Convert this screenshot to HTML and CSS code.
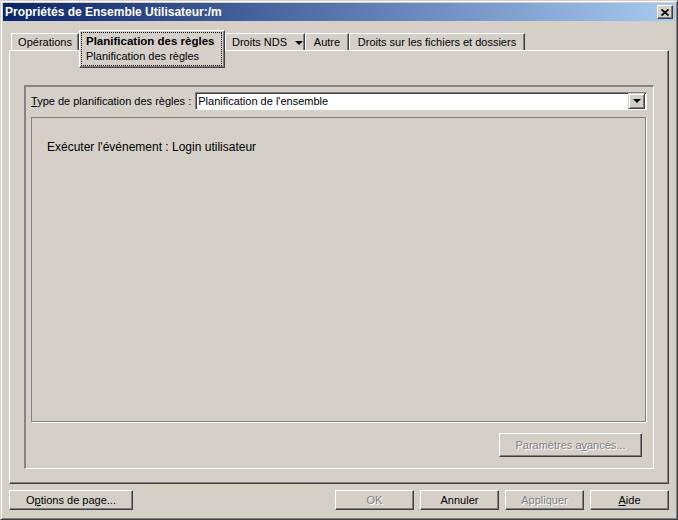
FILE: index.html
```html
<!DOCTYPE html>
<html lang="fr">
<head>
<meta charset="utf-8">
<title>Propriétés de Ensemble Utilisateur:/m</title>
<link rel="stylesheet" href="styles.css">
</head>
<body>
<div class="window">
  <div class="titlebar">
    <span class="title">Propriétés de Ensemble Utilisateur:/m</span>
    <span class="close"><svg width="8" height="7" viewBox="0 0 8 7"><path d="M0.5 0.5 L7.5 6.5 M7.5 0.5 L0.5 6.5" stroke="#000" stroke-width="1.7" fill="none"/></svg></span>
  </div>
  <div class="body">
    <div class="tabs">
      <div class="tab t-ops">Opérations</div>
      <div class="tab sel"><div class="focus"><div class="sel-main">Planification des règles</div><div class="sel-sub">Planification des règles</div></div></div>
      <div class="tab t-nds">Droits NDS <span class="tri"></span></div>
      <div class="tab t-autre">Autre</div>
      <div class="tab t-files">Droits sur les fichiers et dossiers</div>
    </div>
    <div class="panel">
      <div class="group">
        <div class="combo-row">
          <span class="label"><u>T</u>ype de planification des règles :</span>
          <div class="combo">
            <span class="combo-text">Planification de l'ensemble</span>
            <span class="drop"><span class="tri"></span></span>
          </div>
        </div>
        <div class="subpanel">
          <p class="event">Exécuter l'événement : Login utilisateur</p>
        </div>
        <div class="adv-row">
          <button class="btn adv disabled">Paramètres a<u>v</u>ancés...</button>
        </div>
      </div>
    </div>
    <div class="buttons">
      <button class="btn wide">O<u>p</u>tions de page...</button>
      <div class="right-buttons">
        <button class="btn disabled">OK</button>
        <button class="btn">Annuler</button>
        <button class="btn disabled">Appliquer</button>
        <button class="btn"><u>A</u>ide</button>
      </div>
    </div>
  </div>
</div>
</body>
</html>
```

FILE: styles.css
```css
* { box-sizing: border-box; }

body {
  margin: 0;
  background: #d4d0c8;
  font: 11px "Liberation Sans", Arial, sans-serif;
  color: #000;
}

.window {
  width: 678px;
  height: 520px;
  border: 1px solid;
  border-color: #d4d0c8 #404040 #404040 #d4d0c8;
  box-shadow: inset 1px 1px #fff, inset -1px -1px #808080;
  padding: 2px;
  background: #d4d0c8;
}

.titlebar {
  height: 18px;
  display: flex;
  align-items: center;
  justify-content: space-between;
  padding: 0 2px;
  background: linear-gradient(to right, #0a246a, #a6caf0);
  color: #fff;
  font-weight: bold;
  font-size: 12px;
}

.close {
  width: 16px;
  height: 14px;
  background: #d4d0c8;
  border: 1px solid;
  border-color: #fff #404040 #404040 #fff;
  box-shadow: inset -1px -1px #808080;
  display: flex;
  align-items: center;
  justify-content: center;
}

.body {
  padding: 9px 6px 0;
}

.tabs {
  display: flex;
  align-items: flex-end;
  height: 20px;
  padding-left: 2px;
  position: relative;
  z-index: 1;
}

.tab {
  height: 17px;
  border-top: 1px solid #fff;
  border-left: 1px solid #fff;
  border-right: 1px solid #404040;
  box-shadow: inset -1px 0 #808080;
  line-height: 16px;
  text-align: center;
  white-space: nowrap;
  background: #d4d0c8;
}

.t-ops { width: 68px; }
.t-nds { width: 80px; text-align: left; padding-left: 6px; }
.t-autre { width: 44px; }
.t-files { width: 176px; }

.tab.sel {
  width: 146px;
  height: 38px;
  margin-bottom: -18px;
  border-bottom: 1px solid #404040;
  box-shadow: inset -1px -1px #808080;
  padding: 1px;
  text-align: left;
}

.focus {
  height: 34px;
  width: 141px;
  border: 1px dotted #000;
  padding: 1px 0 0 4px;
}

.sel-main {
  font-weight: bold;
  font-size: 11.5px;
  line-height: 15px;
}

.sel-sub {
  line-height: 15px;
}

.tri {
  display: inline-block;
  width: 0;
  height: 0;
  border-left: 4px solid transparent;
  border-right: 4px solid transparent;
  border-top: 4px solid #000;
  vertical-align: middle;
  margin-left: 5px;
}

.panel {
  height: 434px;
  border: 1px solid;
  border-color: #fff #404040 #404040 #fff;
  box-shadow: inset -1px -1px #808080;
  padding: 34px 14px 14px 14px;
  display: flex;
}

.group {
  flex: 1;
  border-top: 2px solid #858585;
  border-left: 2px solid #858585;
  border-right: 1px solid #fff;
  border-bottom: 1px solid #fff;
  padding: 5px 6px 11px 5px;
  display: flex;
  flex-direction: column;
}

.combo-row {
  display: flex;
  align-items: center;
  height: 18px;
  gap: 4px;
}

.label { white-space: nowrap; }

.combo {
  flex: 1;
  height: 18px;
  border: 1px solid;
  border-color: #808080 #fff #fff #808080;
  box-shadow: inset 1px 1px #404040;
  background: #fff;
  display: flex;
  align-items: center;
  padding: 0 1px 0 2px;
}

.combo-text { flex: 1; }

.drop {
  width: 17px;
  height: 16px;
  border: 1px solid;
  border-color: #d4d0c8 #404040 #404040 #d4d0c8;
  box-shadow: inset 1px 1px #fff, inset -1px -1px #808080;
  background: #d4d0c8;
  display: flex;
  align-items: center;
  justify-content: center;
}

.drop .tri { margin-left: 0; }

.subpanel {
  flex: 1;
  margin-top: 7px;
  margin-right: 1px;
  border: 1px solid #808080;
  box-shadow: 1px 1px 0 #fff;
  padding: 22px 15px;
}

.event {
  margin: 0;
  font-size: 12px;
}

.adv-row {
  display: flex;
  justify-content: flex-end;
  margin-top: 11px;
  padding-right: 5px;
}

.btn {
  height: 20px;
  width: 79px;
  padding: 0;
  margin: 0;
  border: 1px solid;
  border-color: #fff #404040 #404040 #fff;
  box-shadow: inset -1px -1px #808080;
  background: #d4d0c8;
  font: 11px "Liberation Sans", Arial, sans-serif;
  color: #000;
  display: flex;
  align-items: center;
  justify-content: center;
}

.btn.adv { width: 143px; height: 24px; }
.btn.wide { width: 124px; }

.btn.disabled {
  color: #808080;
  text-shadow: 1px 1px 0 #fff;
}

.buttons {
  display: flex;
  justify-content: space-between;
  margin-top: 6px;
}

.right-buttons {
  display: flex;
  gap: 6px;
}
```
